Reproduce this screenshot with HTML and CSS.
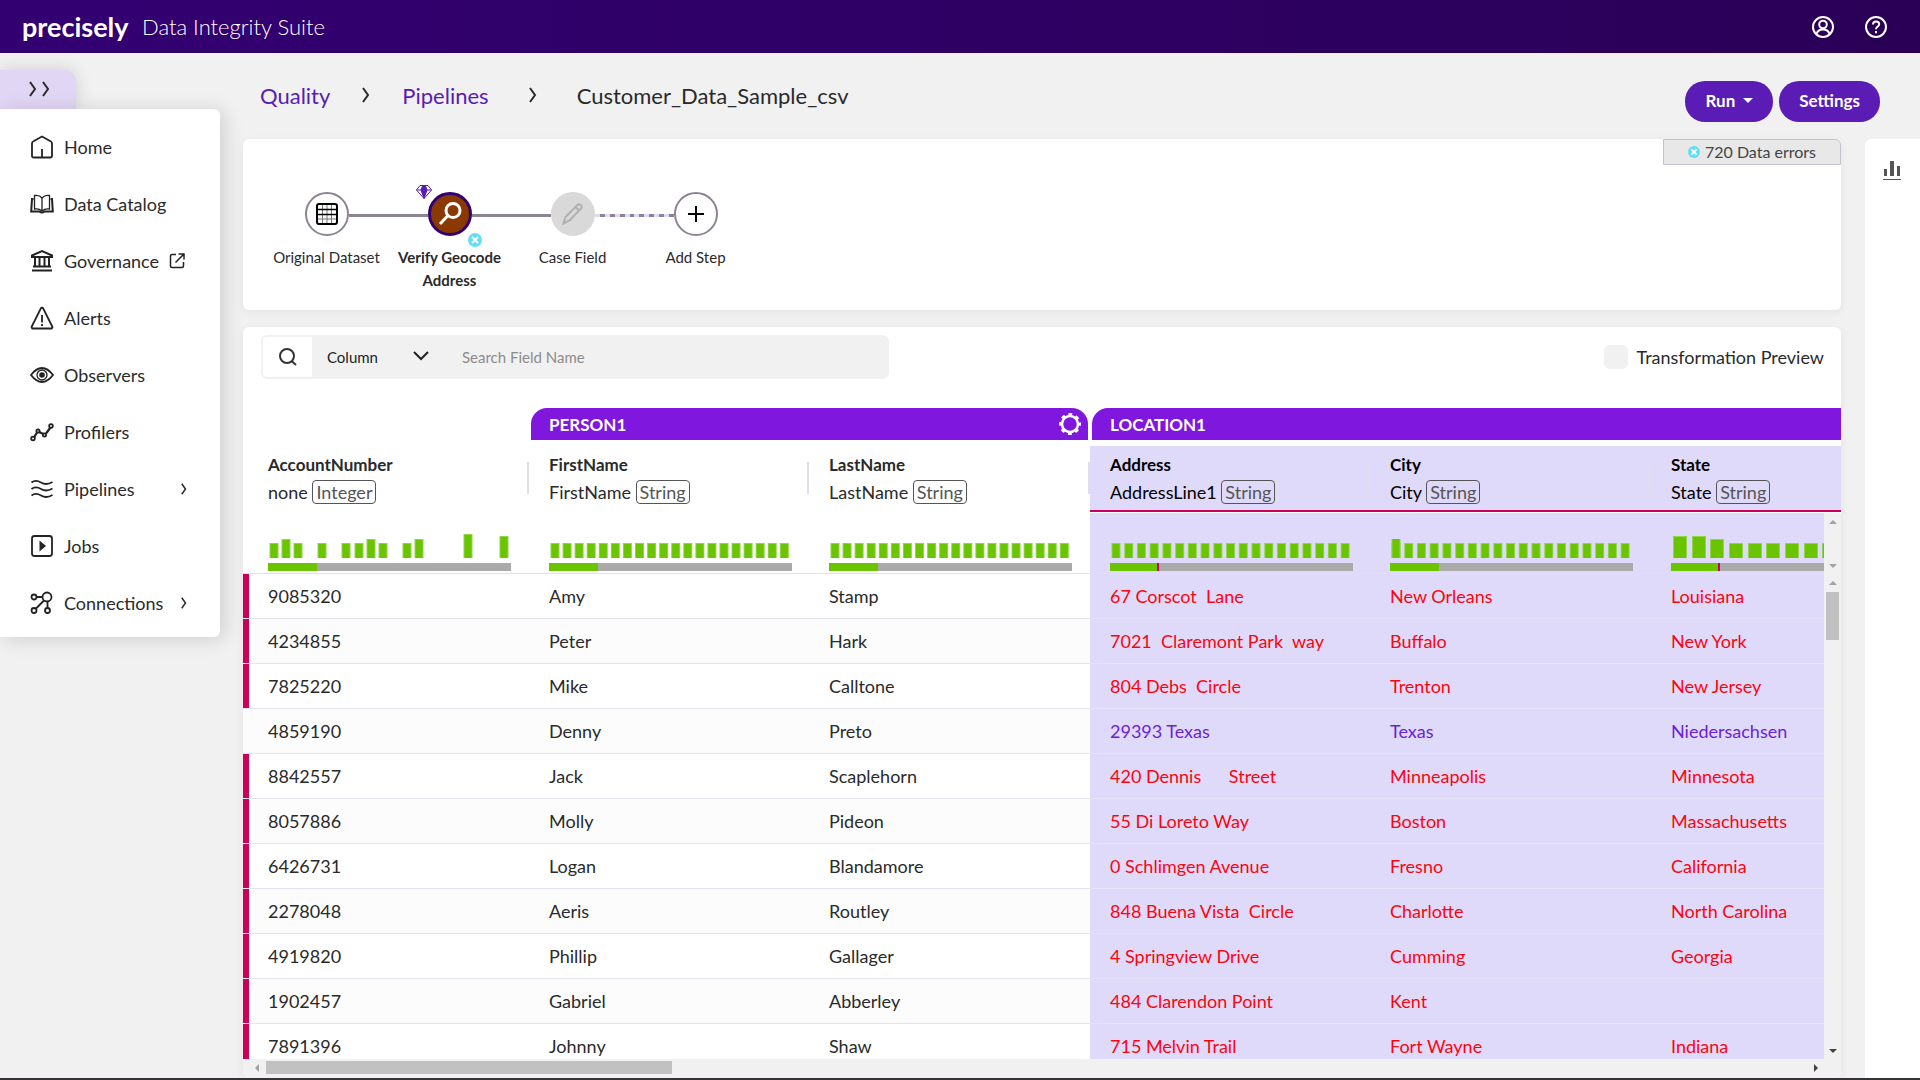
FILE: index.html
```
<!DOCTYPE html>
<html lang="en">
<head>
    <meta charset="UTF-8">
    <meta name="viewport" content="width=device-width, initial-scale=1.0">
    <title>Customer_Data_Sample_csv - Data Integrity Suite</title>
    <link rel="stylesheet" href="styles.css">
</head>
<body>

    <!-- shared shapes -->
    <svg class="defs" width="0" height="0" aria-hidden="true">
        <symbol id="chevron" viewBox="0 0 8 16"><path d="M1 1l5 7-5 7" fill="none" stroke="currentColor" stroke-width="2"/></symbol>
        <symbol id="error-mark" viewBox="0 0 14 14"><circle cx="7" cy="7" r="7" fill="#62dff5"/><path d="M4 4l6 6M10 4l-6 6" stroke="#fff" stroke-width="2"/></symbol>
        <symbol id="bars-20" viewBox="0 0 243 24"><path class="bar-edge" stroke-dasharray="9 3.07" d="M1.500 16.500H242"/><path class="bar-fill" stroke-dasharray="7 5.07" d="M2.500 17H242"/></symbol>
        <symbol id="bars-19" viewBox="0 0 243 24"><path class="bar-edge" stroke-dasharray="9 3.73" d="M1.500 16.500H242"/><path class="bar-fill" stroke-dasharray="7 5.73" d="M2.500 17H242"/></symbol>
    </svg>

    <header class="topbar">
        <span class="logo">precisely</span>
        <span class="product">Data Integrity Suite</span>
        <div class="topbar-actions">
            <button class="icon-button" aria-label="Account">
                <svg width="22" height="22" viewBox="0 0 22 22" fill="none" stroke="#fff" stroke-width="2"><circle cx="11" cy="11" r="10"/><circle cx="11" cy="8.500" r="3.800"/><path d="M4.500 18c.8-3.200 3-4.600 6.500-4.600s5.700 1.400 6.500 4.600"/></svg>
            </button>
            <button class="icon-button" aria-label="Help">
                <svg width="22" height="22" viewBox="0 0 22 22" fill="none" stroke="#fff" stroke-width="2"><circle cx="11" cy="11" r="10"/><path d="M8 8.500c0-4 6.200-3.700 6.200-.3 0 2.300-3.200 2.300-3.200 5M11 15v2.200"/></svg>
            </button>
        </div>
    </header>

    <div class="page">
        <aside class="side">
            <button class="side-toggle" aria-label="Expand menu">
                <svg width="8" height="16"><use href="#chevron"/></svg>
                <svg width="8" height="16"><use href="#chevron"/></svg>
            </button>
            <nav>
                <ul class="menu">
                    <li><a href="#">
                        <svg class="menu-icon" viewBox="0 0 24 24"><path d="M2 8.500Q2 7 3.500 6.300L12 1.500l8.500 4.800Q22 7 22 8.500V21q0 1.500-1.500 1.500h-17Q2 22.500 2 21zM12 14v8"/></svg>
                        Home</a></li>
                    <li><a href="#">
                        <svg class="menu-icon" viewBox="0 0 24 24"><path d="M12 6C10 3.500 7 3 4.500 3.500V17c3-.5 5.500.2 7.500 2 2-1.800 4.500-2.500 7.500-2V3.500C17 3 14 3.500 12 6zM12 6v13" stroke-width="1.300"/><path d="M3.500 7H2L1.200 19.500h8.300q2.500 2 5 0h8.300L22 7h-1.500" stroke-width="2"/></svg>
                        Data Catalog</a></li>
                    <li><a href="#">
                        <svg class="menu-icon" viewBox="0 0 24 24"><path d="M2 8V6.500L12 2l10 4.500V8zM5 9v8M9.500 9v8M14.500 9v8M19 9v8M3 17.500h18M2 21.500h20" stroke-width="2"/></svg>
                        Governance
                        <svg class="external" viewBox="0 0 16 16"><path d="M7 1.500H3Q1.500 1.500 1.500 3v10q0 1.500 1.500 1.500h10q1.500 0 1.500-1.500V9M9.500 1h5.500v5.500M15 1L6.500 9.500"/></svg></a></li>
                    <li><a href="#">
                        <svg class="menu-icon" viewBox="0 0 24 24"><path d="M12 1.500l1 .7L22.500 21l-.8 1.500H2.300L1.500 21 11 2.200zM12 9v7.500M12 18v2"/></svg>
                        Alerts</a></li>
                    <li><a href="#">
                        <svg class="menu-icon" viewBox="0 0 24 24"><path d="M1 12c3.500-4.600 7-7 11-7s7.500 2.400 11 7c-3.500 4.600-7 7-11 7S4.500 16.600 1 12z"/><circle cx="12" cy="12" r="5" stroke-width="1.300"/><circle cx="12" cy="12" r="2.800" fill="currentColor" stroke="none"/></svg>
                        Observers</a></li>
                    <li><a href="#">
                        <svg class="menu-icon" viewBox="0 0 24 24"><path d="M4 17.500l3-5M9 12l4.500 2M16 13.500l4.500-6" stroke-width="2.200"/><circle cx="3" cy="18.500" r="1.800"/><circle cx="8" cy="11" r="1.600"/><circle cx="14.500" cy="15" r="1.600"/><circle cx="21" cy="6" r="1.800"/></svg>
                        Profilers</a></li>
                    <li><a href="#">
                        <svg class="menu-icon" viewBox="0 0 24 24"><path d="M1.500 5.500c4-3 7-1.500 9.500 0s6.500 2.500 11.500-.5M1.500 12c4-3 7-1.500 9.500 0s6.500 2.500 11.500-.5M1.500 18.500c4-3 7-1.500 9.500 0s6.500 2.500 11.500-.5"/></svg>
                        Pipelines
                        <svg class="more" viewBox="0 0 8 16"><use href="#chevron"/></svg></a></li>
                    <li><a href="#">
                        <svg class="menu-icon" viewBox="0 0 24 24"><rect x="2" y="2" width="20" height="20" rx="2.500"/><path d="M9.500 6.500l6.500 5.500-6.500 5.500z" fill="currentColor" stroke="none"/></svg>
                        Jobs</a></li>
                    <li><a href="#">
                        <svg class="menu-icon" viewBox="0 0 24 24"><circle cx="4" cy="6" r="2.500"/><circle cx="17" cy="6" r="4.500"/><circle cx="4" cy="19.500" r="2.500"/><circle cx="17.500" cy="19.500" r="2.500"/><path d="M6.500 6h6M14 9.500L6 17.500M17.500 10.500V17"/></svg>
                        Connections
                        <svg class="more" viewBox="0 0 8 16"><use href="#chevron"/></svg></a></li>
                </ul>
            </nav>
        </aside>

        <div class="workspace">
            <div class="page-head">
                <nav class="breadcrumb" aria-label="Breadcrumb">
                    <a href="#">Quality</a>
                    <svg width="8" height="16"><use href="#chevron"/></svg>
                    <a href="#">Pipelines</a>
                    <svg class="last-chevron" width="8" height="16"><use href="#chevron"/></svg>
                    <span>Customer_Data_Sample_csv</span>
                </nav>
                <div class="page-actions">
                    <button class="pill">Run <svg width="10" height="5" viewBox="0 0 10 5"><path d="M0 0h10L5 5z" fill="#fff"/></svg></button>
                    <button class="pill">Settings</button>
                </div>
            </div>

            <div class="columns">
                <main class="main">
                    <section class="card pipeline">
                        <ol class="steps">
                            <li class="step">
                                <div class="track"><i></i>
                                    <button class="node" aria-label="Original Dataset"><svg width="22" height="22" viewBox="0 0 22 22" fill="none" stroke="#000"><path d="M6.500 2v18M11 2v18M15.500 2v18M1 16h20" stroke="#777"/><rect x="1" y="1" width="20" height="20" rx="2" stroke-width="2"/><path d="M1 6.500h20M1 11.500h20" stroke-width="1.500"/></svg></button>
                                <i class="line"></i></div>
                                Original Dataset
                            </li>
                            <li class="step active">
                                <div class="track"><i class="line"></i>
                                    <button class="node" aria-label="Verify Geocode Address"><svg width="24" height="24" viewBox="0 0 24 24" fill="none" stroke="#fff" stroke-width="3"><circle cx="15" cy="8.500" r="7"/><path d="M10 13.500L2 22"/></svg></button>
                                <i class="line"></i>
                                    <svg class="gem" width="16" height="14" viewBox="0 0 16 14" fill="none" stroke="#5a1cb4"><path d="M4 .5h8L15.500 5 8 13.500.5 5zM.5 5h15"/><path d="M6.500 1h3L11 5l-3 8.500L5 5z" fill="#5a1cb4"/></svg>
                                    <svg class="error-badge" width="14" height="14"><use href="#error-mark"/></svg>
                                </div>
                                Verify Geocode Address
                            </li>
                            <li class="step disabled">
                                <div class="track"><i class="line"></i>
                                    <button class="node" aria-label="Case Field"><svg width="22" height="22" viewBox="0 0 22 22" fill="none" stroke="#b0b0b0" stroke-width="2"><path d="M1.500 20.500l2-6.500L15.500 2q1.500-1.500 3.300.2t.2 3.300L7.500 17.500zM13.500 4l4 4"/></svg></button>
                                <i class="line dotted"></i></div>
                                Case Field
                            </li>
                            <li class="step">
                                <div class="track"><i class="line dotted"></i>
                                    <button class="node" aria-label="Add Step"><svg width="16" height="16" viewBox="0 0 16 16" stroke="#000" stroke-width="2"><path d="M8 0v16M0 8h16"/></svg></button>
                                <i></i></div>
                                Add Step
                            </li>
                        </ol>
                        <div class="error-count"><svg width="12" height="12"><use href="#error-mark"/></svg>720 Data errors</div>
                    </section>

                    <section class="card data">
                        <div class="toolbar">
                            <div class="search">
                                <button class="search-button" aria-label="Search"><svg width="18" height="18" viewBox="0 0 18 18" fill="none" stroke="#333" stroke-width="2"><circle cx="8" cy="8" r="7"/><path d="M12.500 13l4.500 4"/></svg></button>
                                <select aria-label="Search by"><option>Column</option></select>
                                <input type="text" placeholder="Search Field Name" aria-label="Search Field Name">
                            </div>
                            <label class="preview"><input type="checkbox">Transformation Preview</label>
                        </div>

                        <div class="table-view">
                            <table>
                                <colgroup><col class="first"><col><col><col><col><col></colgroup>
                                <thead>
                                    <tr class="groups">
                                        <td></td>
                                        <th colspan="2"><div class="group">PERSON1
                                            <button class="icon-button" aria-label="PERSON1 settings"><svg width="22" height="22" viewBox="0 0 22 22" fill="none" stroke="#fff"><circle cx="11" cy="11" r="8" stroke-width="2.500"/><circle cx="11" cy="11" r="9.700" stroke-width="2.400" stroke-dasharray="3.800 3.818" stroke-dashoffset="1.900"/></svg></button></div></th>
                                        <th colspan="3"><div class="group open">LOCATION1</div></th>
                                    </tr>
                                    <tr class="fields">
                                        <th><div class="field"><b>AccountNumber</b><span>none <em>Integer</em></span></div></th>
                                        <th><div class="field"><b>FirstName</b><span>FirstName <em>String</em></span></div></th>
                                        <th><div class="field"><b>LastName</b><span>LastName <em>String</em></span></div></th>
                                        <th class="loc"><div class="field"><b>Address</b><span>AddressLine1 <em>String</em></span></div></th>
                                        <th class="loc"><div class="field"><b>City</b><span>City <em>String</em></span></div></th>
                                        <th class="loc"><div class="field"><b>State</b><span>State <em>String</em></span></div></th>
                                    </tr>
                                    <tr class="charts">
                                        <td><svg class="bars" viewBox="0 0 243 24">
                                            <path class="hist-edge" d="M6 24V9M18 24V5M30 24V9M54 24V9M78 24V9M91 24V9M103 24V5M115 24V9M139 24V9M151 24V5M200 24V0M236 24V2"/>
                                            <path class="hist-fill" d="M6 24V10M18 24V6M30 24V10M54 24V10M78 24V10M91 24V10M103 24V6M115 24V10M139 24V10M151 24V6M200 24V1M236 24V3"/></svg>
                                            <div class="quality"><i></i></div></td>
                                        <td><svg class="bars"><use href="#bars-20"/></svg><div class="quality"><i></i></div></td>
                                        <td><svg class="bars"><use href="#bars-20"/></svg><div class="quality"><i></i></div></td>
                                        <td class="loc"><svg class="bars"><use href="#bars-19"/></svg><div class="quality"><i class="bad"></i></div></td>
                                        <td class="loc"><svg class="bars"><use href="#bars-19"/><path class="hist-edge" d="M6 24V5"/><path class="hist-fill" d="M6 24V5"/></svg><div class="quality"><i></i></div></td>
                                        <td class="loc"><svg class="bars">
                                            <path class="hist-edge wide" d="M9 24V2M28 24V2M46 24V5M65 24V9M84 24V9M102 24V9M121 24V9M140 24V9M158 24V9M177 24V9"/>
                                            <path class="hist-fill wide" d="M9 24V3M28 24V3M46 24V6M65 24V10M84 24V10M102 24V10M121 24V10M140 24V10M158 24V10M177 24V10"/></svg>
                                            <div class="quality"><i class="bad"></i></div></td>
                                    </tr>
                                </thead>
                                <tbody>
                                    <tr class="error"><td>9085320</td><td>Amy</td><td>Stamp</td><td>67 Corscot  Lane</td><td>New Orleans</td><td>Louisiana</td></tr>
                                    <tr class="error"><td>4234855</td><td>Peter</td><td>Hark</td><td>7021  Claremont Park  way</td><td>Buffalo</td><td>New York</td></tr>
                                    <tr class="error"><td>7825220</td><td>Mike</td><td>Calltone</td><td>804 Debs  Circle</td><td>Trenton</td><td>New Jersey</td></tr>
                                    <tr><td>4859190</td><td>Denny</td><td>Preto</td><td>29393 Texas</td><td>Texas</td><td>Niedersachsen</td></tr>
                                    <tr class="error"><td>8842557</td><td>Jack</td><td>Scaplehorn</td><td>420 Dennis      Street</td><td>Minneapolis</td><td>Minnesota</td></tr>
                                    <tr class="error"><td>8057886</td><td>Molly</td><td>Pideon</td><td>55 Di Loreto Way</td><td>Boston</td><td>Massachusetts</td></tr>
                                    <tr class="error"><td>6426731</td><td>Logan</td><td>Blandamore</td><td>0 Schlimgen Avenue</td><td>Fresno</td><td>California</td></tr>
                                    <tr class="error"><td>2278048</td><td>Aeris</td><td>Routley</td><td>848 Buena Vista  Circle</td><td>Charlotte</td><td>North Carolina</td></tr>
                                    <tr class="error"><td>4919820</td><td>Phillip</td><td>Gallager</td><td>4 Springview Drive</td><td>Cumming</td><td>Georgia</td></tr>
                                    <tr class="error"><td>1902457</td><td>Gabriel</td><td>Abberley</td><td>484 Clarendon Point</td><td>Kent</td><td></td></tr>
                                    <tr class="error"><td>7891396</td><td>Johnny</td><td>Shaw</td><td>715 Melvin Trail</td><td>Fort Wayne</td><td>Indiana</td></tr>
                                </tbody>
                            </table>
                            <div class="scroll-y">
                                <div class="scroll-short"><i class="arrow up"></i><i class="arrow down"></i></div>
                                <div class="scroll-long"><i class="arrow up"></i><i class="thumb"></i><i class="arrow down dark"></i></div>
                            </div>
                        </div>
                        <div class="scroll-x"><i class="arrow left"></i><i class="thumb"></i><i class="arrow right dark"></i></div>
                    </section>
                </main>

                <aside class="rail">
                    <button class="icon-button" aria-label="Statistics">
                        <svg width="18" height="20" viewBox="0 0 18 20" fill="#555"><path d="M1 8h3v7H1zM7 0h4v15H7zM14 5h3v10h-3zM0 18h18v1H0z"/></svg>
                    </button>
                </aside>
            </div>
        </div>
    </div>

</body>
</html>
```
FILE: styles.css
```
* {
    box-sizing: border-box;
}

body {
    display: flex;
    flex-direction: column;
    height: 100vh;
    margin: 0;
    font-family: Lato, sans-serif;
    font-size: 18px;
    color: #2a2a2a;
    background-color: #f1f1f1;
    border-bottom: 2px solid #363236;
    overflow: hidden;
}

button, input, select {
    font-family: inherit;
    color: inherit;
}

button {
    padding: 0;
    border: none;
    background: none;
    cursor: pointer;
}

a {
    color: inherit;
    text-decoration: none;
}

svg {
    flex: none;
}

.defs {
    position: absolute;
}

.icon-button {
    display: flex;
}

/* top bar */

.topbar {
    display: flex;
    align-items: center;
    flex: none;
    height: 53px;
    padding: 0 33px 0 22px;
    color: #fff;
    background: linear-gradient(90deg, #330072, #2a0057);
}

.logo {
    width: 120px;
    font-size: 27px;
    line-height: 32px;
    font-weight: bold;
}

.product {
    font-size: 22px;
    font-weight: 300;
}

.topbar-actions {
    display: flex;
    gap: 31px;
    margin-left: auto;
}

/* side menu */

.page {
    display: flex;
    flex: 1;
    min-height: 0;
}

.side {
    flex: none;
    width: 220px;
    padding-top: 17px;
}

.side-toggle {
    display: flex;
    align-items: center;
    gap: 5px;
    width: 76px;
    height: 39px;
    padding: 0 0 2px 29px;
    background-color: #e2d6f5;
    border-radius: 0 12px 0 0;
    box-shadow: 0 0 18px rgba(0, 0, 0, 0.15);
}

.menu {
    position: relative;
    margin: 0;
    padding: 9px 0 6px;
    list-style: none;
    background-color: #fff;
    border-radius: 0 6px 6px 0;
    box-shadow: 4px 2px 20px rgba(0, 0, 0, 0.15);
}

.menu a {
    display: flex;
    align-items: center;
    height: 57px;
    padding: 0 33px 0 30px;
}

.menu-icon, .external {
    width: 24px;
    height: 24px;
    margin-right: 10px;
    fill: none;
    stroke: #222;
    stroke-width: 1.8;
    color: #222;
}

.external {
    width: 16px;
    height: 16px;
    margin: 0 0 0 10px;
    stroke-width: 1.5;
}

.more {
    width: 6px;
    height: 12px;
    margin-left: auto;
}

/* page heading */

.workspace {
    display: flex;
    flex: 1;
    flex-direction: column;
    min-width: 0;
    padding-left: 23px;
}

.page-head {
    display: flex;
    justify-content: space-between;
    height: 86px;
    padding: 28px 40px 0 17px;
}

.breadcrumb {
    display: flex;
    align-items: center;
    gap: 32px;
    height: 28px;
    font-size: 22px;
}

.breadcrumb a {
    color: #5a1cb4;
}

.last-chevron {
    margin: 0 8px;
}

.page-actions {
    display: flex;
    gap: 6px;
}

.pill {
    display: flex;
    align-items: center;
    gap: 8px;
    height: 41px;
    padding: 0 20px 2px;
    font-size: 17px;
    font-weight: bold;
    color: #fff;
    background-color: #5a1cb4;
    border-radius: 20px;
}

.columns {
    display: flex;
    flex: 1;
    gap: 24px;
    min-height: 0;
}

.main {
    display: flex;
    flex: 1;
    flex-direction: column;
    gap: 17px;
    min-width: 0;
}

.card {
    background-color: #fff;
    border-radius: 6px;
    box-shadow: 0 2px 10px rgba(0, 0, 0, 0.06);
}

.rail {
    width: 55px;
    padding: 22px 18px;
    background-color: #fff;
    border-radius: 6px 0 0 0;
}

/* pipeline steps */

.pipeline {
    display: flex;
    align-items: flex-start;
    justify-content: space-between;
    min-height: 171px;
}

.steps {
    display: flex;
    margin: 0;
    padding: 53px 22px 16px;
    list-style: none;
}

.step {
    width: 123px;
    font-size: 15px;
    line-height: 23px;
    text-align: center;
}

.track {
    position: relative;
    display: flex;
    align-items: center;
    margin-bottom: 10px;
}

.track i {
    flex: 1;
}

.line {
    height: 3px;
    margin-top: 2px;
    background-color: #8c8490;
}

.dotted {
    background: repeating-linear-gradient(90deg, #e0dafa 0 5px, #8c8490 5px 10px);
}

.node {
    display: flex;
    align-items: center;
    justify-content: center;
    width: 44px;
    height: 44px;
    border: 2px solid #8c8490;
    border-radius: 50%;
    background-color: #fff;
}

.active {
    padding: 0 5px;
    font-weight: bold;
}

.active .track {
    margin: 0 -5px 10px;
}

.active .node {
    border: 3px solid #330072;
    background-color: #8a3a00;
}

.disabled .node {
    border-color: #d9d9d9;
    background-color: #d9d9d9;
}

.gem {
    position: absolute;
    top: -7px;
    left: 28px;
}

.error-badge {
    position: absolute;
    top: 41px;
    right: 29px;
}

.error-count {
    display: flex;
    align-items: center;
    justify-content: center;
    gap: 5px;
    width: 178px;
    height: 26px;
    padding-bottom: 1px;
    font-size: 16px;
    color: #444;
    background-color: #e8e8e8;
    border: 1px solid #c4c2d0;
    border-radius: 0 6px 0 0;
}

/* data card */

.data {
    display: flex;
    flex: 1;
    flex-direction: column;
    min-height: 0;
    overflow: hidden;
}

.toolbar {
    display: flex;
    flex: none;
    align-items: center;
    justify-content: space-between;
    padding: 8px 17px 29px 18px;
}

.search {
    display: flex;
    width: 628px;
    height: 44px;
    background-color: #f1f1f1;
    border: 2px solid #f1f1f1;
    border-radius: 6px;
}

.search-button {
    display: flex;
    align-items: center;
    justify-content: center;
    width: 49px;
    background-color: #fff;
    border-radius: 4px 0 0 4px;
}

.search select {
    width: 134px;
    padding: 0 15px;
    font-size: 15px;
    color: #222;
    border: none;
    appearance: none;
    background: url("data:image/svg+xml,%3Csvg xmlns='http://www.w3.org/2000/svg' width='16' height='10'%3E%3Cpath d='M1 1l7 7 7-7' fill='none' stroke='%23222' stroke-width='2'/%3E%3C/svg%3E") no-repeat 101px 14px;
}

.search input {
    flex: 1;
    padding: 0 16px;
    font-size: 15px;
    background: none;
    border: none;
}

.search input::placeholder {
    color: #8c8c8c;
}

.preview {
    display: flex;
    align-items: center;
    gap: 9px;
}

.preview input {
    width: 24px;
    height: 24px;
    margin: 0;
    appearance: none;
    background-color: #f1f1f1;
    border-radius: 6px;
}

.table-view {
    position: relative;
    flex: 1;
    min-height: 0;
    overflow: hidden;
}

table {
    width: 1688px;
    table-layout: fixed;
    border-spacing: 0;
}

col {
    width: 280px;
}

col:nth-child(odd) {
    width: 281px;
}

col.first:first-child {
    width: 286px;
}

th, td {
    padding: 0 0 0 20px;
    text-align: left;
    font-weight: normal;
}

tr > :first-child {
    padding-left: 25px;
}

.groups th {
    height: 38px;
    padding: 0 2px;
    vertical-align: top;
}

.group {
    display: flex;
    align-items: center;
    justify-content: space-between;
    height: 32px;
    padding: 0 7px 0 18px;
    font-weight: bold;
    font-size: 17px;
    color: #fff;
    background-color: #8017de;
    border-radius: 16px 16px 0 0;
}

.open {
    border-radius: 16px 0 0 0;
}

.fields th {
    height: 66px;
    border-bottom: 2px solid transparent;
}

.fields .loc {
    color: #000;
    border-bottom-color: #cc0056;
}

.field {
    display: flex;
    flex-direction: column;
    gap: 6px;
    height: 32px;
    justify-content: center;
    border-right: 2px solid #dde0ec;
}

.field b {
    font-size: 17px;
}

.field em {
    padding: 0 3px;
    font-style: normal;
    color: #555;
    border: 1px solid #555;
    border-radius: 4px;
}

.loc, tbody td:nth-child(n+4) {
    background-color: #e0dafa;
}

.charts td {
    height: 62px;
    padding-top: 21px;
    vertical-align: top;
    border-top: 1px solid #fff;
    border-bottom: 1px solid #dfe1ec;
}

.bars {
    display: block;
    width: 243px;
    height: 24px;
    overflow: visible;
}

.bar-edge, .bar-fill, .hist-edge, .hist-fill {
    fill: none;
    stroke: #8ed64a;
    stroke-width: 15;
}

.bar-fill, .hist-fill {
    stroke: #6ac500;
    stroke-width: 14;
}

.hist-edge {
    stroke-width: 9;
}

.hist-fill {
    stroke-width: 7;
}

.hist-edge.wide {
    stroke-width: 14;
}

.hist-fill.wide {
    stroke-width: 12;
}

.quality {
    width: 243px;
    height: 8px;
    margin-top: 5px;
    background-color: #aaa;
}

.quality i {
    display: block;
    width: 20%;
    height: 100%;
    background-color: #6ac500;
}

.quality .bad {
    border-right: 2px solid #cc0056;
}

tbody td {
    height: 45px;
    border-bottom: 1px solid #e1e4ee;
    white-space: pre;
}

tbody tr:nth-child(even) td:nth-child(-n+3) {
    background-color: #fbfcfb;
}

tbody td:nth-child(n+4) {
    color: #6a1fd8;
    border-bottom-color: #e6e2f6;
}

.error td:nth-child(n+4) {
    color: #fb0410;
}

.error td:first-child {
    box-shadow: inset 6px 0 #cc0056;
}

/* scrollbars */

.scroll-y {
    position: absolute;
    top: 105px;
    right: 0;
    bottom: 0;
    display: flex;
    flex-direction: column;
    width: 17px;
    background-color: #f1f1f1;
}

.scroll-short, .scroll-long {
    display: flex;
    flex-direction: column;
    align-items: center;
    height: 61px;
    padding: 7px 0 6px;
}

.scroll-long {
    flex: 1;
}

.arrow {
    border: 4px solid transparent;
}

.up {
    border-top: none;
    border-bottom-color: #a3a3a3;
}

.down {
    margin-top: auto;
    border-bottom: none;
    border-top-color: #a3a3a3;
}

.left {
    border-left: none;
    border-right-color: #a3a3a3;
}

.right {
    margin-left: auto;
    border-right: none;
    border-left-color: #a3a3a3;
}

.down.dark {
    border-top-color: #444;
}

.right.dark {
    border-left-color: #444;
}

.thumb {
    width: 13px;
    height: 48px;
    margin-top: 7px;
    background-color: #c1c1c1;
}

.scroll-x {
    display: flex;
    flex: none;
    align-items: center;
    height: 19px;
    padding: 0 23px 2px 12px;
    background-color: #f1f1f1;
}

.scroll-x .thumb {
    width: 26%;
    height: 13px;
    margin: 0 0 0 7px;
}
```
